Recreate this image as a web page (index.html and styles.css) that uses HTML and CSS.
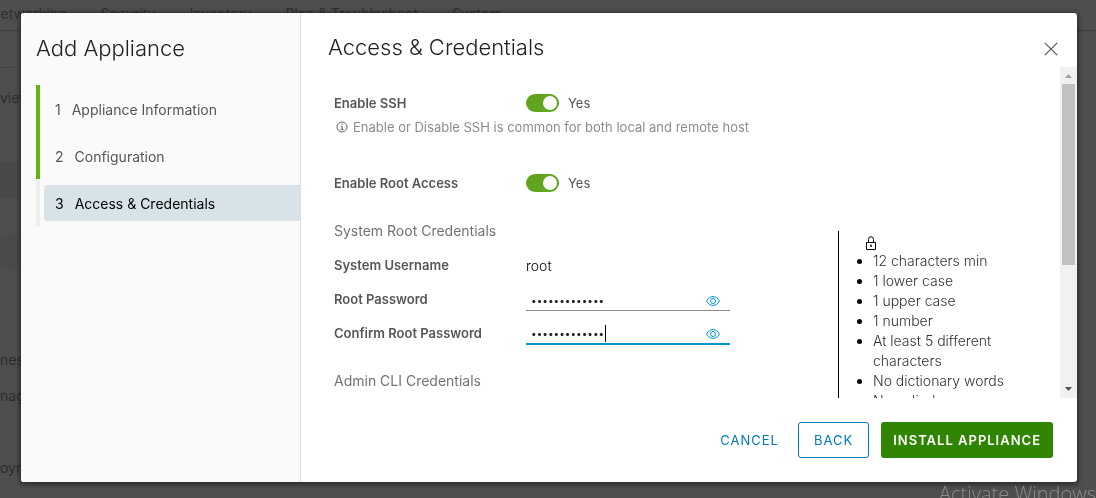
FILE: index.html
```
<!DOCTYPE html>
<html lang="en">
<head>
  <meta charset="UTF-8">
  <title>Add Appliance</title>
  <meta name="viewport" content="width=device-width, initial-scale=1">
  <link rel="stylesheet" href="styles.css">
</head>
<body>
  <div class="page">
    <nav class="topnav">
      <a href="#">Networking</a>
      <a href="#">Security</a>
      <a href="#">Inventory</a>
      <a href="#">Plan &amp; Troubleshoot</a>
      <a href="#">System</a>
    </nav>
    <div class="subnav"></div>
    <aside class="page-side">
      <div class="side-row side-title">view</div>
      <div class="side-row side-blue"></div>
      <div class="side-row side-gap"></div>
      <div class="side-row side-grey"></div>
      <div class="side-row side-text">nes</div>
      <div class="side-row">nag</div>
      <div class="side-row side-last">oym</div>
    </aside>
  </div>

  <div class="backdrop">
    <div class="modal" role="dialog" aria-labelledby="wizard-title">
      <aside class="steps">
        <h1 id="wizard-title">Add Appliance</h1>
        <ol>
          <li class="done"><button type="button"><span>1</span>Appliance Information</button></li>
          <li class="done"><button type="button"><span>2</span>Configuration</button></li>
          <li class="active"><button type="button"><span>3</span>Access &amp; Credentials</button></li>
        </ol>
      </aside>

      <form class="main">
        <header>
          <h2>Access &amp; Credentials</h2>
          <button type="button" class="close" aria-label="Close">
            <svg width="14" height="14" viewBox="0 0 14 14"><path d="M.8.8l12.4 12.4M13.2.8L.8 13.2" fill="none" stroke="#565656" stroke-width="1.2"/></svg>
          </button>
        </header>

        <div class="scroll">
          <div class="content">
            <div class="row">
              <label class="label" for="ssh">Enable SSH</label>
              <input type="checkbox" class="toggle" id="ssh" checked>
              <span class="yes">Yes</span>
            </div>
            <p class="hint">
              <svg width="12" height="12" viewBox="0 0 12 12" fill="none" stroke="#666"><circle cx="6" cy="6" r="5"/><path d="M6 2.7v1.3M4.7 5.4h1.4v3M4.4 8.7h3.3"/></svg>
              Enable or Disable SSH is common for both local and remote host
            </p>
            <div class="row row-root">
              <label class="label" for="rootaccess">Enable Root Access</label>
              <input type="checkbox" class="toggle" id="rootaccess" checked>
              <span class="yes">Yes</span>
            </div>

            <div class="credentials">
              <div class="fields">
                <h3>System Root Credentials</h3>
                <div class="field-row">
                  <span class="label">System Username</span>
                  <span class="value">root</span>
                </div>
                <div class="field-row">
                  <label class="label" for="pw">Root Password</label>
                  <div class="password">
                    <input type="password" id="pw" value="aaaaaaaaaaaaa">
                    <button type="button" aria-label="Show password">
                      <svg width="14" height="10" viewBox="0 0 14 10" fill="none" stroke="#0095d3"><path d="M.6 5C2 2.2 4.3.6 7 .6S12 2.2 13.4 5C12 7.8 9.7 9.4 7 9.4S2 7.8.6 5z"/><circle cx="7" cy="5" r="2.5"/></svg>
                    </button>
                  </div>
                </div>
                <div class="field-row">
                  <label class="label" for="pw2">Confirm Root Password</label>
                  <div class="password focused">
                    <input type="password" id="pw2" value="aaaaaaaaaaaaa">
                    <span class="caret"></span>
                    <button type="button" aria-label="Show password">
                      <svg width="14" height="10" viewBox="0 0 14 10" fill="none" stroke="#0095d3"><path d="M.6 5C2 2.2 4.3.6 7 .6S12 2.2 13.4 5C12 7.8 9.7 9.4 7 9.4S2 7.8.6 5z"/><circle cx="7" cy="5" r="2.5"/></svg>
                    </button>
                  </div>
                </div>
                <h3 class="admin">Admin CLI Credentials</h3>
              </div>

              <div class="rules">
                <svg class="lock" width="10" height="14" viewBox="0 0 10 14" fill="none" stroke="#000"><path d="M.5 6.5h9v7h-9zM2.5 6.5v-3a2.5 2.8 0 0 1 5 0v3"/><path d="M5 8.5v2.5" stroke-width="1.4"/></svg>
                <ul>
                  <li>12 characters min</li>
                  <li>1 lower case</li>
                  <li>1 upper case</li>
                  <li>1 number</li>
                  <li>At least 5 different characters</li>
                  <li>No dictionary words</li>
                  <li>No palindromes</li>
                </ul>
              </div>
            </div>
          </div>
          <div class="scrollbar" aria-hidden="true">
            <svg width="17" height="17" viewBox="0 0 17 17"><path d="M5 11l3.5-4 3.5 4z" fill="#a3a3a3"/></svg>
            <div class="track"><div class="thumb"></div></div>
            <svg width="17" height="17" viewBox="0 0 17 17"><path d="M5 6l3.5 4L12 6z" fill="#505050"/></svg>
          </div>
        </div>

        <footer>
          <button type="button" class="btn btn-link">Cancel</button>
          <button type="button" class="btn btn-outline">Back</button>
          <button type="button" class="btn btn-success">Install Appliance</button>
        </footer>
      </form>
    </div>
  </div>
  <div class="watermark">Activate Windows</div>
</body>
</html>
```
FILE: styles.css
```
* {
  box-sizing: border-box;
}

body {
  margin: 0;
  font-family: Inter, "Open Sans", sans-serif;
  font-size: 14px;
  color: #565656;
  overflow: hidden;
}

h1, h2, h3, p, ol, ul {
  margin: 0;
  padding: 0;
  font-weight: 300;
}

button, input {
  font-family: inherit;
  margin: 0;
}

button {
  cursor: pointer;
}

/* page behind the dialog */
.page {
  height: 100vh;
  overflow: hidden;
  background: #fff;
}

.topnav {
  display: flex;
  gap: 34px;
  height: 31px;
  margin-left: -10px;
  line-height: 28px;
  border-bottom: 1px solid #aaa;
}

.topnav a {
  color: #666;
  text-decoration: none;
  white-space: nowrap;
}

.subnav {
  width: 300px;
  height: 37px;
  border-bottom: 1px solid #ccc;
}

.page-side {
  width: 300px;
}

.side-row {
  height: 36px;
  line-height: 36px;
}

.side-title {
  height: 94px;
  line-height: 60px;
}

.side-blue {
  background: #dfe5ea;
}

.side-grey {
  background: #e8e8e8;
}

.side-text {
  margin-top: 72px;
}

.side-last {
  margin-top: 36px;
}

.backdrop {
  position: fixed;
  inset: 0;
  display: flex;
  padding: 13px 19px 16px 21px;
  background: rgba(34, 34, 34, 0.8);
}

.modal {
  display: flex;
  flex: 1;
  min-width: 0;
  background: #fff;
  border-radius: 3px;
  overflow: hidden;
  box-shadow: 0 1px 4px 2px rgba(0, 0, 0, 0.4);
}

/* step list */
.steps {
  width: 280px;
  flex-shrink: 0;
  padding: 20px 0 0 15px;
  background: #fafafa;
  border-right: 1px solid #ddd;
}

.steps h1 {
  font-size: 22px;
  line-height: 30px;
  color: #222;
}

.steps ol {
  margin-top: 22px;
  list-style: none;
}

.steps li {
  padding: 6px 0 5px 4px;
  border-left: 4px solid #eee;
}

.steps li.done {
  border-color: #60b515;
}

.steps li.active {
  padding-bottom: 6px;
}

.steps button {
  display: flex;
  align-items: center;
  gap: 11px;
  width: 100%;
  height: 36px;
  padding: 0 11px;
  border: none;
  border-radius: 3px 0 0 3px;
  background: none;
  font-size: 14px;
  color: #565656;
}

.steps .active button {
  background: #d8e3e9;
  color: #000;
}

/* right side */
.main {
  display: flex;
  flex-direction: column;
  flex: 1;
  min-width: 0;
}

.main header {
  display: flex;
  justify-content: space-between;
  align-items: center;
  height: 54px;
  flex-shrink: 0;
  padding: 14px 19px 0 27px;
}

.main h2 {
  font-size: 22px;
  line-height: 30px;
  color: #222;
}

.close {
  display: flex;
  padding: 4px 0 0;
  border: none;
  background: none;
}

.scroll {
  display: flex;
  flex: 1;
  min-height: 0;
}

.content {
  flex: 1;
  min-width: 0;
  padding: 24px 43px 0 33px;
  overflow: hidden;
}

.row {
  display: flex;
  align-items: center;
  height: 24px;
}

.label {
  width: 192px;
  flex-shrink: 0;
  font-size: 13px;
  font-weight: 600;
}

.toggle {
  appearance: none;
  display: flex;
  width: 33px;
  height: 18px;
  padding: 2px;
  justify-content: flex-end;
  border-radius: 9px;
  background: #60a420;
}

.toggle::before {
  content: "";
  width: 14px;
  height: 14px;
  border-radius: 50%;
  background: #fafafa;
}

.yes {
  margin-left: 9px;
  font-size: 13px;
}

.hint {
  display: flex;
  align-items: center;
  gap: 5px;
  padding-left: 2px;
  font-size: 13px;
  font-weight: 400;
  line-height: 24px;
  color: #8c8c8c;
}

.row-root {
  margin-top: 32px;
}

.credentials {
  display: flex;
  justify-content: space-between;
  margin-top: 19px;
}

.fields h3 {
  font-size: 14px;
  font-weight: 400;
  line-height: 34px;
  color: #737373;
}

.fields .admin {
  margin-top: 14px;
}

.field-row {
  display: flex;
  align-items: center;
  height: 34px;
}

.value {
  color: #000;
  font-weight: 300;
}

.password {
  position: relative;
  display: flex;
  align-items: center;
  width: 204px;
  height: 24px;
  padding-right: 10px;
  border-bottom: 1px solid #8c8c8c;
}

.password input {
  flex: 1;
  min-width: 0;
  padding: 2px 5px 0;
  border: none;
  outline: none;
  background: none;
  font-size: 10px;
  line-height: 18px;
  color: #222;
}

.password button {
  display: flex;
  padding: 4px 0 0;
  border: none;
  background: none;
}

.password.focused {
  border-bottom: 2px solid #0095d3;
}

.caret {
  position: absolute;
  left: 79px;
  top: 4px;
  width: 1px;
  height: 17px;
  background: #000;
}

.rules {
  width: 179px;
  height: 220px;
  margin-top: 17px;
  padding: 5px 0 0 34px;
  border-left: 1px solid #000;
  color: #333;
}

.lock {
  display: block;
  margin: 0 0 1px -7px;
}

.rules ul {
  line-height: 20px;
}

.rules li {
  font-weight: 300;
}

.rules li::marker {
  color: #000;
}

.scrollbar {
  display: flex;
  flex-direction: column;
  width: 17px;
  background: #f1f1f1;
}

.track {
  flex: 1;
  padding: 0 2px;
}

.thumb {
  height: 61%;
  background: #c1c1c1;
}

.main footer {
  display: flex;
  justify-content: flex-end;
  gap: 12px;
  padding: 24px;
}

.btn {
  height: 36px;
  padding: 0 11px;
  border: 1px solid transparent;
  border-radius: 3px;
  background: none;
  font-size: 13px;
  font-weight: 400;
  letter-spacing: 1px;
  text-transform: uppercase;
  color: #0079b8;
}

.btn-link {
  padding: 0 6px;
}

.btn-outline {
  padding: 0 15px;
  border-color: #0079b8;
}

.btn-success {
  background: #2f8400;
  color: #fff;
  font-weight: 600;
}

.watermark {
  position: fixed;
  right: 0;
  bottom: -9px;
  font-family: "Open Sans", sans-serif;
  font-size: 20px;
  line-height: 26px;
  color: #8a8a8a;
  font-weight: 300;
}
```
